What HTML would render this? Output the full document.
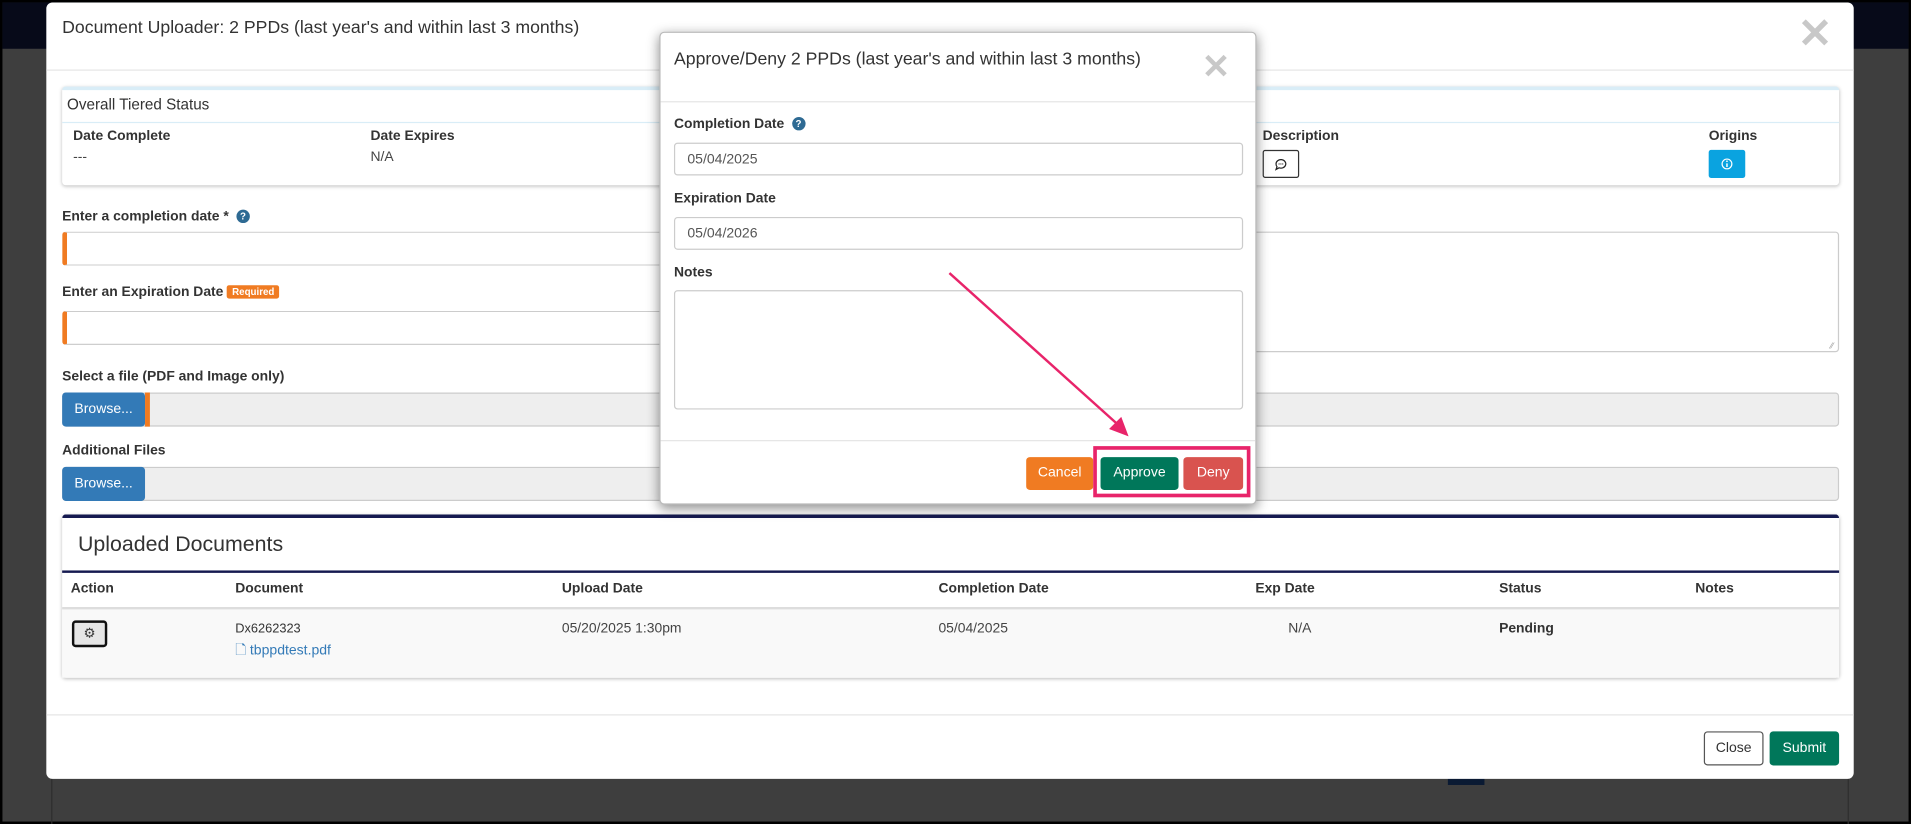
<!DOCTYPE html>
<html><head><meta charset="utf-8"><style>
html,body{margin:0;padding:0;width:1911px;height:824px;overflow:hidden;background:#000;}
#s{position:absolute;left:0;top:0;width:1568px;height:676px;transform:scale(1.21875,1.2189);transform-origin:0 0;font-family:"Liberation Sans",Arial,sans-serif;color:#333;}
.a{position:absolute;}
.bg{left:2px;top:2px;right:2px;bottom:2px;background:#3e3e3e;}
.topband{left:2px;top:2px;right:2px;height:38px;background:#070a19;}
.modal{left:38px;top:2px;width:1483px;height:637px;background:#fff;border-radius:5px;}
.lbl{font-size:11.4px;font-weight:bold;color:#333;}
.val{font-size:11.4px;color:#444;}
.inp{background:#fff;border:1px solid #ccc;border-radius:3px;box-sizing:border-box;}
.help{display:inline-block;width:11px;height:11px;border-radius:50%;background:#2e6a93;color:#fff;font-size:8px;line-height:11px;text-align:center;font-weight:bold;vertical-align:1px;margin-left:3px;}
.btn{position:absolute;box-sizing:border-box;border-radius:3px;font-size:11.5px;color:#fff;text-align:center;}
</style></head><body><div id="s">
<div class="a bg"></div>
<div class="a topband"></div>
<div class="a" style="left:42px;top:40px;width:1px;height:636px;background:#2e2e2e"></div>
<div class="a" style="left:1516px;top:40px;width:1px;height:636px;background:#2e2e2e"></div>
<div class="a" style="left:1188px;top:636px;width:30px;height:8px;background:#0a1a33"></div>

<div class="a modal">
 <div class="a" style="left:13px;top:13px;font-size:14.5px;color:#333">Document Uploader: 2 PPDs (last year's and within last 3 months)</div>
 <div class="a" style="left:1437px;top:6px;font-size:34px;color:#c8c8c8;font-weight:bold">✕</div>
 <div class="a" style="left:0;top:55px;width:1483px;height:1px;background:#e5e5e5"></div>

 <div class="a" style="left:13px;top:69px;width:1458px;height:78px;background:#fff;border-top:3px solid #d9edf7;box-shadow:0 1px 3px rgba(0,0,0,.25);border-radius:3px">
  <div class="a" style="left:4px;top:5px;font-size:12.5px;color:#333">Overall Tiered Status</div>
  <div class="a" style="left:0;top:26px;width:1458px;height:1px;background:#d9edf7"></div>
  <div class="a lbl" style="left:9px;top:32px">Date Complete</div>
  <div class="a val" style="left:9px;top:49px">---</div>
  <div class="a lbl" style="left:253px;top:32px">Date Expires</div>
  <div class="a val" style="left:253px;top:49px">N/A</div>
  <div class="a lbl" style="left:985px;top:32px">Description</div>
  <div class="a" style="left:985px;top:49px;width:30px;height:23px;border:1px solid #333;border-radius:2px;box-sizing:border-box">
   <svg width="28" height="21" style="position:absolute;left:0;top:0"><path d="M10 10.5a4 3.5 0 1 1 2.5 3.2l-2.5 1.3 0.8-2.2a3.5 3.5 0 0 1-0.8-2.3z" fill="none" stroke="#222" stroke-width="1"/><circle cx="12.5" cy="10.5" r=".5" fill="#222"/><circle cx="14" cy="10.5" r=".5" fill="#222"/><circle cx="15.5" cy="10.5" r=".5" fill="#222"/></svg>
  </div>
  <div class="a lbl" style="left:1351px;top:32px">Origins</div>
  <div class="a" style="left:1351px;top:49px;width:30px;height:23px;background:#0aa3e0;border-radius:2px">
   <svg width="30" height="23" style="position:absolute;left:0;top:0"><circle cx="15" cy="11.5" r="4" fill="none" stroke="#fff" stroke-width="1"/><line x1="15" y1="11" x2="15" y2="14" stroke="#fff" stroke-width="1.2"/><circle cx="15" cy="9.3" r=".7" fill="#fff"/></svg>
  </div>
 </div>

 <div class="a lbl" style="left:13px;top:170px">Enter a completion date * <span class="help">?</span></div>
 <div class="a inp" style="left:13px;top:188px;width:950px;height:28px;border-left:4px solid #f07b22"></div>
 <div class="a inp" style="left:900px;top:188px;width:571px;height:99px"></div>
 <div class="a" style="left:1464px;top:279px;font-size:7px;color:#999">⁄⁄</div>
 <div class="a lbl" style="left:13px;top:232px">Enter an Expiration Date <span style="display:inline-block;background:#f07b22;color:#fff;font-size:8px;padding:1px 4px;border-radius:2px;vertical-align:1px">Required</span></div>
 <div class="a inp" style="left:13px;top:253px;width:950px;height:28px;border-left:4px solid #f07b22"></div>

 <div class="a lbl" style="left:13px;top:301px">Select a file (PDF and Image only)</div>
 <div class="a inp" style="left:13px;top:320px;width:1458px;height:28px;background:#eee"></div>
 <div class="btn" style="left:13px;top:320px;width:68px;height:28px;background:#337ab7;line-height:28px">Browse...</div>
 <div class="a" style="left:81px;top:320px;width:4px;height:28px;background:#f07b22"></div>
 <div class="a lbl" style="left:13px;top:362px">Additional Files</div>
 <div class="a inp" style="left:13px;top:381px;width:1458px;height:28px;background:#eee"></div>
 <div class="btn" style="left:13px;top:381px;width:68px;height:28px;background:#337ab7;line-height:28px">Browse...</div>

 <div class="a" style="left:13px;top:420px;width:1458px;height:131px;background:#fff;border-top:3px solid #151a50;box-shadow:0 1px 3px rgba(0,0,0,.25);border-radius:3px">
  <div class="a" style="left:13px;top:11px;font-size:17.5px;color:#333">Uploaded Documents</div>
  <div class="a" style="left:0;top:43px;width:1458px;height:2px;background:#151a50"></div>
  <div class="a lbl" style="left:7px;top:52px">Action</div>
  <div class="a lbl" style="left:142px;top:52px">Document</div>
  <div class="a lbl" style="left:410px;top:52px">Upload Date</div>
  <div class="a lbl" style="left:719px;top:52px">Completion Date</div>
  <div class="a lbl" style="left:979px;top:52px">Exp Date</div>
  <div class="a lbl" style="left:1179px;top:52px">Status</div>
  <div class="a lbl" style="left:1340px;top:52px">Notes</div>
  <div class="a" style="left:0;top:73px;width:1458px;height:2px;background:#ddd"></div>
  <div class="a" style="left:0;top:75px;width:1458px;height:56px;background:#f9f9f9"></div>
  <div class="a" style="left:8px;top:84px;width:29px;height:22px;border:2px solid #111;border-radius:3px;box-sizing:border-box;background:#e6e6e6;font-size:11px;text-align:center;line-height:18px">⚙</div>
  <div class="a" style="left:142px;top:85px;font-size:10.5px;color:#333">Dx6262323</div>
  <div class="a" style="left:142px;top:100px;font-size:11.5px;color:#337ab7"><span style="font-size:11px">🗋</span> tbppdtest.pdf</div>
  <div class="a val" style="left:410px;top:85px">05/20/2025 1:30pm</div>
  <div class="a val" style="left:719px;top:85px">05/04/2025</div>
  <div class="a val" style="left:1006px;top:85px">N/A</div>
  <div class="a lbl" style="left:1179px;top:85px">Pending</div>
 </div>

 <div class="a" style="left:0;top:584px;width:1483px;height:1px;background:#e5e5e5"></div>
 <div class="btn" style="left:1360px;top:598px;width:49px;height:28px;border:1px solid #555;color:#333;line-height:26px;background:#fff">Close</div>
 <div class="btn" style="left:1414px;top:598px;width:57px;height:28px;background:#00775a;line-height:28px">Submit</div>
</div>

<div class="a" style="left:541px;top:26px;width:490px;height:388px;background:#fff;border-radius:4px;box-shadow:0 3px 10px rgba(0,0,0,.45);border:1px solid #bbb;box-sizing:border-box">
 <div class="a" style="left:11px;top:14px;font-size:14.5px;color:#333">Approve/Deny 2 PPDs (last year's and within last 3 months)</div>
 <div class="a" style="left:444px;top:11px;font-size:28px;color:#c8c8c8;font-weight:bold">✕</div>
 <div class="a" style="left:0;top:56px;width:488px;height:1px;background:#e5e5e5"></div>
 <div class="a lbl" style="left:11px;top:69px">Completion Date <span class="help">?</span></div>
 <div class="a inp" style="left:11px;top:90px;width:467px;height:27px;font-size:11.5px;color:#555;padding:7px 10px">05/04/2025</div>
 <div class="a lbl" style="left:11px;top:130px">Expiration Date</div>
 <div class="a inp" style="left:11px;top:151px;width:467px;height:27px;font-size:11.5px;color:#555;padding:7px 10px">05/04/2026</div>
 <div class="a lbl" style="left:11px;top:191px">Notes</div>
 <div class="a inp" style="left:11px;top:211px;width:467px;height:98px"></div>
 <div class="a" style="left:0;top:334px;width:488px;height:1px;background:#e5e5e5"></div>
 <div class="btn" style="left:300px;top:348px;width:55px;height:27px;background:#f07b22;line-height:27px">Cancel</div>
 <div class="btn" style="left:361px;top:348px;width:64px;height:27px;background:#00775a;line-height:27px">Approve</div>
 <div class="btn" style="left:429px;top:348px;width:49px;height:27px;background:#d9534f;line-height:27px">Deny</div>
 <div class="a" style="left:355px;top:339px;width:129px;height:42px;border:3px solid #e8246a;box-sizing:border-box"></div>
</div>
<svg class="a" style="left:0;top:0" width="1568" height="676">
 <line x1="779" y1="224" x2="918" y2="349" stroke="#e8246a" stroke-width="2"/>
 <polygon points="926,358 910,352 920,342" fill="#e8246a"/>
</svg>
</div></body></html>
